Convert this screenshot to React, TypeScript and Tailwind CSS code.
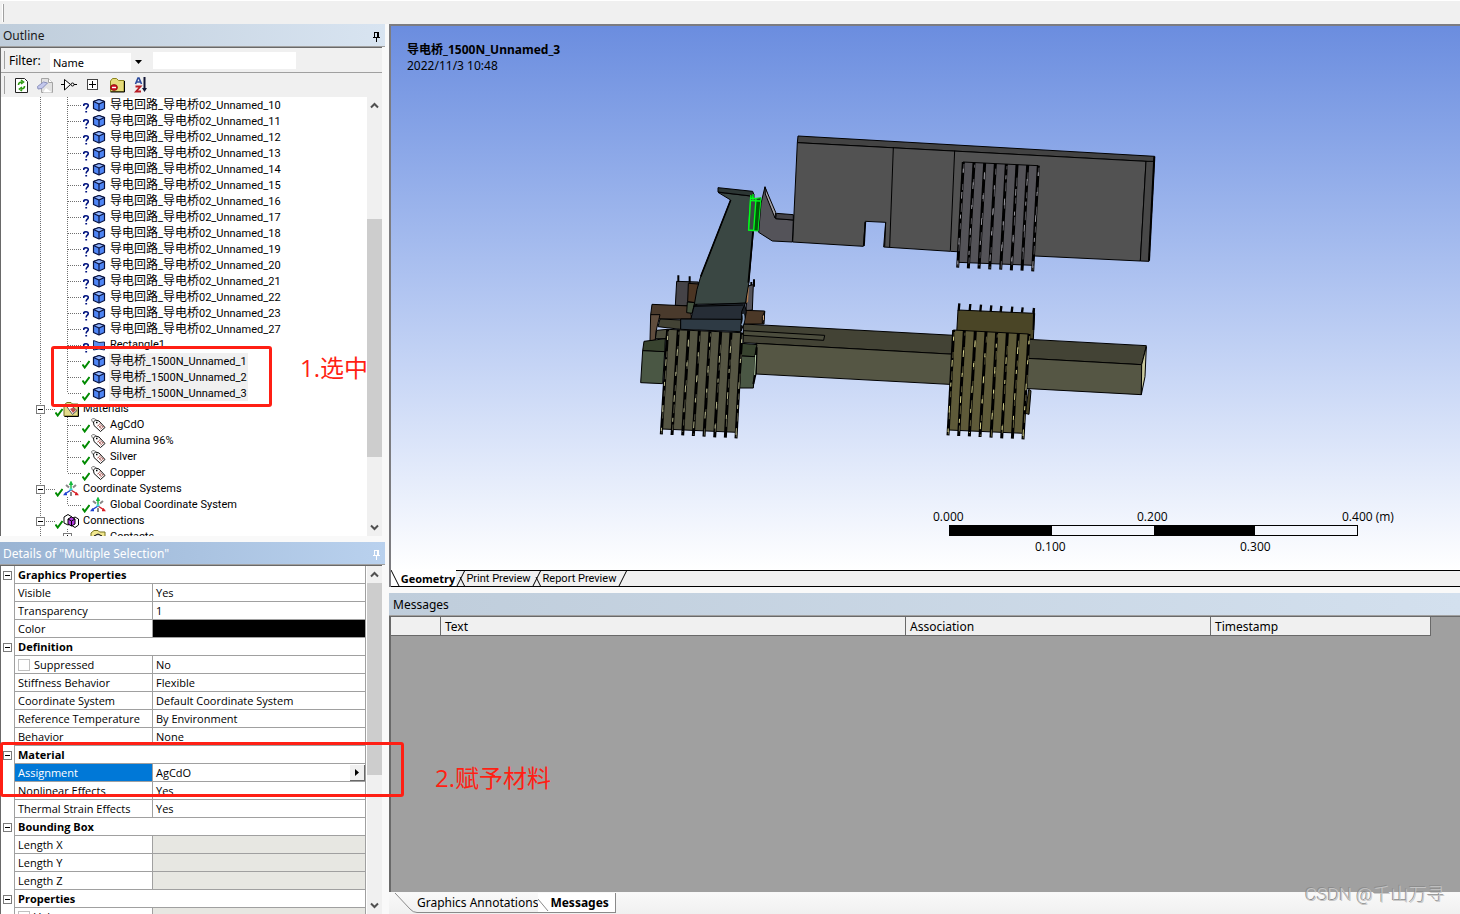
import type { ReactNode } from "react";

const UI = "font-['Open_Sans','Noto_Sans_CJK_SC',sans-serif]";
const HEAD = "font-['Noto_Sans','Noto_Sans_CJK_SC',sans-serif]";
const TREE = "font-['Roboto','Noto_Sans_CJK_SC',sans-serif]";

type Status = "unknown" | "ok";
type IconKind = "body" | "surface" | "materials" | "tag" | "axes" | "connections" | "contacts";
type TreeItem = {
  label: string;
  level: 1 | 2;
  icon: IconKind;
  status?: Status;
  expander?: "+" | "-";
  last?: boolean;
  selected?: boolean;
};

const bodies = [10, 11, 12, 13, 14, 15, 16, 17, 18, 19, 20, 21, 22, 23, 27];

const treeItems: TreeItem[] = [
  ...bodies.map((n): TreeItem => ({
    label: `导电回路_导电桥02_Unnamed_${n}`,
    level: 2,
    icon: "body",
    status: "unknown",
  })),
  { label: "Rectangle1", level: 2, icon: "surface", status: "unknown" },
  { label: "导电桥_1500N_Unnamed_1", level: 2, icon: "body", status: "ok", selected: true },
  { label: "导电桥_1500N_Unnamed_2", level: 2, icon: "body", status: "ok", selected: true },
  { label: "导电桥_1500N_Unnamed_3", level: 2, icon: "body", status: "ok", selected: true, last: true },
  { label: "Materials", level: 1, icon: "materials", status: "ok", expander: "-" },
  { label: "AgCdO", level: 2, icon: "tag", status: "ok" },
  { label: "Alumina 96%", level: 2, icon: "tag", status: "ok" },
  { label: "Silver", level: 2, icon: "tag", status: "ok" },
  { label: "Copper", level: 2, icon: "tag", status: "ok", last: true },
  { label: "Coordinate Systems", level: 1, icon: "axes", status: "ok", expander: "-" },
  { label: "Global Coordinate System", level: 2, icon: "axes", status: "ok", last: true },
  { label: "Connections", level: 1, icon: "connections", status: "ok", expander: "-" },
  { label: "Contacts", level: 2, icon: "contacts", expander: "+" },
];

type Prop = { label: string; value?: string; kind?: "group" | "color" | "check" | "active" | "readonly" | "checkReadonly" };

const props: Prop[] = [
  { label: "Graphics Properties", kind: "group" },
  { label: "Visible", value: "Yes" },
  { label: "Transparency", value: "1" },
  { label: "Color", kind: "color" },
  { label: "Definition", kind: "group" },
  { label: "Suppressed", value: "No", kind: "check" },
  { label: "Stiffness Behavior", value: "Flexible" },
  { label: "Coordinate System", value: "Default Coordinate System" },
  { label: "Reference Temperature", value: "By Environment" },
  { label: "Behavior", value: "None" },
  { label: "Material", kind: "group" },
  { label: "Assignment", value: "AgCdO", kind: "active" },
  { label: "Nonlinear Effects", value: "Yes" },
  { label: "Thermal Strain Effects", value: "Yes" },
  { label: "Bounding Box", kind: "group" },
  { label: "Length X", kind: "readonly" },
  { label: "Length Y", kind: "readonly" },
  { label: "Length Z", kind: "readonly" },
  { label: "Properties", kind: "group" },
  { label: "Volume", kind: "checkReadonly" },
];

function Pin() {
  return (
    <svg width="9" height="11" viewBox="0 0 9 11" fill="none" stroke="currentColor" shapeRendering="crispEdges">
      <path d="M2.5 1v5M2 1.5h5M5.5 1v5M6.5 1v5M1 6.5h7M4.5 7v4" />
    </svg>
  );
}

function Chevron({ down }: { down?: boolean }) {
  return (
    <svg width="9" height="7" viewBox="0 0 9 7" fill="none" stroke="#505050" strokeWidth="2">
      <path d={down ? "M1 1.5l3.5 3.5L8 1.5" : "M1 5.5L4.5 2 8 5.5"} />
    </svg>
  );
}

function ScrollBar({ thumb }: { thumb: string }) {
  return (
    <div className="flex w-[15px] shrink-0 flex-col items-center bg-[#f0f0f0]">
      <button type="button" aria-label="Scroll up" className="flex h-[17px] w-full shrink-0 items-center justify-center">
        <Chevron />
      </button>
      <div className="w-full flex-1">
        <div className={`w-full bg-[#cdcdcd] ${thumb}`} />
      </div>
      <button type="button" aria-label="Scroll down" className="flex h-[17px] w-full shrink-0 items-center justify-center">
        <Chevron down />
      </button>
    </div>
  );
}

// dotted connector lines left of a node
function Guides({ item }: { item: TreeItem }) {
  const dots = { stroke: "#6f6f6f", strokeDasharray: "1 1", shapeRendering: "crispEdges" as const };
  const box = (x: number) => (
    <g transform={`translate(${x} 4)`} shapeRendering="crispEdges">
      <path d="M.5 .5h8v8h-8z" fill="#fff" stroke="#7b7b7b" />
      <path d={item.expander === "+" ? "M2 4.5h5M4.5 2v5" : "M2 4.5h5"} stroke="#000" />
    </g>
  );
  if (item.level === 1) {
    return (
      <svg className="shrink-0" width="54" height="16">
        <path d="M39.5 0v16M45 8.5h9" fill="none" {...dots} />
        {box(35)}
      </svg>
    );
  }
  return (
    <svg className="shrink-0" width="81" height="16">
      <path d={`M39.5 0v16M66.5 0v${item.last ? 8 : 16}M67 8.5h14`} fill="none" {...dots} />
      {item.expander && box(62)}
    </svg>
  );
}

function StatusMark({ status }: { status?: Status }) {
  if (status === "unknown") {
    return (
      <svg className="w-2 shrink-0" width="8" height="16" viewBox="0 0 8 16" fill="none" stroke="#00137f" strokeWidth="1.6">
        <path d="M1.800 9V7.600Q2.200 6.800 4 6.800Q6.300 6.800 6.300 8.600Q6.300 9.800 5 10.400Q4.200 11 4.200 12.600M3.300 14.800h1.800" />
      </svg>
    );
  }
  if (status === "ok") {
    return (
      <svg className="w-2 shrink-0" width="8" height="16" viewBox="0 0 8 16" fill="none" stroke="#008a00" strokeWidth="2">
        <path d="M.5 11.500l2.200 3L7.500 8" />
      </svg>
    );
  }
  return <span className="w-2 shrink-0" />;
}

function NodeIcon({ kind }: { kind: IconKind }) {
  const paths: Record<IconKind, ReactNode> = {
    body: (
      <g stroke="#0a1440" strokeWidth="1.200" strokeLinejoin="round">
        <path d="M3.500 4.500L9 2.500 14.500 4.500v7L9 14 3.500 11.500z" fill="#4f86f5" />
        <path d="M3.500 4.500L9 7 14.500 4.500 9 2.500z" fill="#8fb4ff" />
        <path d="M9 7v7" />
      </g>
    ),
    surface: (
      <path d="M3.500 3.500L9 5.500 14.500 5v8L9 12 3.500 13z" fill="#5c8ef0" stroke="#14275c" />
    ),
    materials: (
      <g strokeLinejoin="round">
        <path d="M1 4L4 1.500h4L9.500 3H15v12H1z" fill="#e4dc8c" stroke="#77731f" />
        <path d="M3 4.500L7 3.500l7 6-4.500 4z" fill="#fff" stroke="#555" />
        <path d="M7 8l3-1.500L13 9l-3 3z" fill="#c0504a" />
        <path d="M1.500 15.500H15.500V4" fill="none" stroke="#000" />
      </g>
    ),
    tag: (
      <g strokeLinejoin="round">
        <path d="M6 7Q1 5 1.500 2.500 4 0 7 4" fill="none" stroke="#777" />
        <path d="M3.500 5L5.500 3 9 4l6 6.500-4.500 4L4 8.500z" fill="#fff" stroke="#111" />
        <path d="M6 5.500h1.500" stroke="#000" strokeWidth="1.500" />
        <path d="M7.500 9l3-2.500M9 10.500l3-2.500M10.500 12l3-2.500M8 8l4 4M9.500 7l4 3.500" stroke="#9a3a34" strokeDasharray="1 .7" />
      </g>
    ),
    axes: (
      <g fill="none" strokeWidth="1.400">
        <path d="M3 4l3 2.500M13 4l-3 2.500M8 11v4" stroke="#888" strokeWidth="2" />
        <path d="M8 9V1M6.500 4L8 1l1.500 3" stroke="#14b83c" />
        <path d="M8 9l-7 4.500M4 13.500H1.500L3 11.500" stroke="#1c3fd0" />
        <path d="M8 9l7 4.500M12 13.500h2.500L13 11.500" stroke="#d81c24" />
        <path d="M6.500 8.500h3" stroke="#3fd8e8" strokeWidth="2" />
      </g>
    ),
    connections: (
      <g stroke="#000" strokeWidth="1" strokeLinejoin="round">
        <path d="M1 4l4-2.500L9 4v6l-4 2-4-2z" fill="#fff" />
        <path d="M8 6l4-2 3.500 2v6L12 14.500 8 12z" fill="#fff" />
        <path d="M5 6l3.500-2L12 6v5l-3.500 2L5 11z" fill="#b43be0" />
        <path d="M5 6l3.500 2L12 6M8.500 8v5" fill="none" />
      </g>
    ),
    contacts: (
      <g>
        <path d="M1 4L4 1.500h4L9.500 3H15v12H1z" fill="#f1e78e" stroke="#77731f" />
        <path d="M4 7l4-2 4 2v5H4z" fill="#ddd" stroke="#000" />
      </g>
    ),
  };
  return (
    <svg className="shrink-0" width="16" height="16" viewBox="0 0 16 16">
      {paths[kind]}
    </svg>
  );
}

// Han runs are set one pixel larger than the Latin text
function NodeLabel({ text }: { text: string }) {
  return text.split(/([\u4e00-\u9fff]+)/).map((part, i) =>
    i % 2 ? <span key={i} className="text-[12px]">{part}</span> : part,
  );
}

function TreeRow({ item }: { item: TreeItem }) {
  return (
    <li className="flex h-4 items-center whitespace-nowrap">
      <Guides item={item} />
      <StatusMark status={item.status} />
      <NodeIcon kind={item.icon} />
      <button
        type="button"
        className={`ml-[3px] h-4 px-px text-[11px] leading-4 text-black ${item.selected ? "bg-[#f0f0f0]" : ""}`}
      >
        <NodeLabel text={item.label} />
      </button>
    </li>
  );
}

function ToolButton({ label, children }: { label: string; children: ReactNode }) {
  return (
    <button type="button" aria-label={label} className="flex size-4 items-center justify-center">
      <svg width="16" height="16" viewBox="0 0 16 16">
        {children}
      </svg>
    </button>
  );
}

function Outline() {
  return (
    <section>
      <header className={`${HEAD} flex h-[23px] items-center justify-between border-b border-[#a0a0a0] bg-linear-to-r from-[#bfcddb] to-[#d8e4f1] pt-[2px] pr-1 pl-[3px] text-[12px] text-[#1a1a1a]`}>
        <h2>Outline</h2>
        <button type="button" aria-label="Pin Outline" className="text-black"><Pin /></button>
      </header>
      <div className="mr-[3px] border-t border-l border-[#696969]">
        <div className="flex h-[25px] items-center border-b border-[#a0a0a0] bg-[#f0f0f0] pl-[3px]">
          <span className="h-[18px] w-px bg-[#a0a0a0]" />
          <label htmlFor="filter-kind" className={`${HEAD} ml-1 w-[41px] pt-[2px] text-[12px]`}>Filter:</label>
          <div className="relative mt-1 flex">
            <select id="filter-kind" className={`${HEAD} h-[18px] w-[95px] appearance-none bg-white pt-px pl-[3px] text-[11px] leading-4`}>
              <option>Name</option>
            </select>
            <span className="pointer-events-none absolute inset-y-0 right-0 flex w-[14px] items-center justify-center bg-[#f0f0f0]">
              <svg width="7" height="4"><path d="M0 0h7L3.500 4z" /></svg>
            </span>
          </div>
          <input aria-label="Filter text" className="ml-2 h-[17px] w-[143px] bg-white text-[11px]" />
        </div>
        <div className="flex h-6 items-center bg-[#f0f0f0] pl-[3px]">
          <span className="mr-2 h-[18px] w-px bg-[#a0a0a0]" />
          <div className="flex gap-2">
            <ToolButton label="Refresh">
              <path d="M2.500 1.500h9l3 3v11h-12z" fill="#fff" stroke="#222" />
              <path d="M5.500 8Q5.500 5 9 5M8 3l2.500 2L8 7M11.500 9Q11.500 12 8 12M9 10l-2.500 2L9 14" fill="none" stroke="#2f9b12" strokeWidth="1.600" />
            </ToolButton>
            <ToolButton label="Clear data">
              <path d="M4.500 1.500h7l4 4v10h-11z" fill="#e2e2e2" stroke="#a4a4a4" />
              <path d="M11.500 1.500v4h4" fill="#fff" stroke="#a4a4a4" />
              <path d="M.5 9.500L6.500 5l4 1L5 11.500 1 12z" fill="#c3c8ec" stroke="#8a90bc" />
              <path d="M9 11l6 4.500H6z" fill="#fff" />
            </ToolButton>
            <ToolButton label="Filter wire">
              <path d="M0 7.500h3M3.500 2.500v10.500l6-5.500zM13 7.500h3" fill="#fff" stroke="#000" />
              <circle cx="11.500" cy="7.500" r="1.500" fill="#fff" stroke="#000" />
            </ToolButton>
            <ToolButton label="Expand all">
              <path d="M2.500 2.500h10v10h-10z" fill="#fff" stroke="#444" shapeRendering="crispEdges" />
              <path d="M4 7.500h7M7.500 4v7" stroke="#000" shapeRendering="crispEdges" />
            </ToolButton>
            <ToolButton label="Hide folders">
              <path d="M1.500 4l2-2.500h4L9.500 3.500H15v11H1.500z" fill="#e6dc7c" stroke="#8a8420" />
              <path d="M1.500 15H15.500V4" fill="none" stroke="#000" />
              <ellipse cx="5" cy="10.500" rx="3.500" ry="3" fill="#d01020" stroke="#600" strokeWidth=".6" />
              <path d="M3 10.500h4" stroke="#fff" strokeWidth="1.400" />
            </ToolButton>
            <ToolButton label="Sort">
              <path d="M2.500 7L5 1h1l2.500 6M3.500 5h4" fill="none" stroke="#2c4a9c" strokeWidth="1.600" />
              <path d="M2.500 9.500h5L3 14.500H8" fill="none" stroke="#b81c24" strokeWidth="1.800" />
              <path d="M11.500 0v13" stroke="#111433" strokeWidth="2" />
              <path d="M9 11h5L11.500 15z" fill="#111433" />
            </ToolButton>
          </div>
        </div>
        <div className="flex h-[439px] overflow-hidden bg-white">
          <ul className={`${TREE} min-w-0 flex-1 overflow-hidden`}>
            {treeItems.map((item) => (
              <TreeRow key={item.label} item={item} />
            ))}
          </ul>
          <ScrollBar thumb="mt-[105px] h-[238px]" />
        </div>
      </div>
    </section>
  );
}

function PropRow({ prop }: { prop: Prop }) {
  const { label, value, kind } = prop;
  const id = label.toLowerCase().replace(/ /g, "-");
  if (kind === "group") {
    return (
      <tr className="h-[18px]">
        <td className="border-r border-[#a0a0a0] p-0">
          <button type="button" aria-label={`Collapse ${label}`} className="ml-[2px] block">
            <svg width="9" height="9" viewBox="0 0 9 9" fill="#fff" stroke="#7b7b7b" shapeRendering="crispEdges">
              <path d="M.5 .5h8v8h-8z" />
              <path d="M2 4.5h5" stroke="#000" />
            </svg>
          </button>
        </td>
        <th colSpan={2} className="border-r border-b border-[#a0a0a0] p-0 pl-[3px] text-left font-bold">{label}</th>
      </tr>
    );
  }
  const hasCheck = kind === "check" || kind === "checkReadonly";
  const readonly = kind === "readonly" || kind === "checkReadonly";
  return (
    <tr className="h-[18px]">
      <td className="border-r border-[#a0a0a0] p-0" />
      <td className={`border-r border-b border-[#a0a0a0] p-0 pl-[3px] ${kind === "active" ? "bg-[#0078d7] text-white" : ""}`}>
        {hasCheck ? (
          <span className="flex items-center gap-1">
            <input id={id} type="checkbox" className="size-3 appearance-none border border-[#c0c0c0] bg-white" />
            <label htmlFor={id}>{label}</label>
          </span>
        ) : (
          label
        )}
      </td>
      <td className={`border-r border-b border-[#a0a0a0] p-0 pl-[3px] ${kind === "color" ? "bg-black" : readonly ? "bg-[#e7e7e2]" : ""}`}>
        {kind === "active" ? (
          <span className="flex items-center justify-between">
            {value}
            <button type="button" aria-label="Choose material" className="flex h-[16px] w-[15px] items-center justify-center border-r border-b border-[#696969] bg-[#f0f0f0]">
              <svg width="4" height="7"><path d="M0 0v7l4-3.500z" /></svg>
            </button>
          </span>
        ) : (
          value
        )}
      </td>
    </tr>
  );
}

function Details() {
  return (
    <section className="flex min-h-0 flex-1 flex-col">
      <header className={`${HEAD} flex h-[23px] shrink-0 items-center justify-between border-b border-[#a0a0a0] bg-linear-to-r from-[#9ab4d3] to-[#b9d1ee] pt-[2px] pr-1 pl-[3px] text-[12px] text-white`}>
        <h2>Details of "Multiple Selection"</h2>
        <button type="button" aria-label="Pin Details"><Pin /></button>
      </header>
      <div className="mr-[3px] flex min-h-0 flex-1 overflow-hidden border-t border-l border-[#696969] bg-white">
        <div className="min-w-0 flex-1 overflow-hidden pr-px">
          <table className="w-full table-fixed border-separate border-spacing-0 text-[11px] leading-[17px]">
            <colgroup>
              <col className="w-[14px]" />
              <col className="w-[138px]" />
              <col />
            </colgroup>
            <tbody>
              {props.map((p) => (
                <PropRow key={p.label} prop={p} />
              ))}
            </tbody>
          </table>
        </div>
        <ScrollBar thumb="h-[192px]" />
      </div>
    </section>
  );
}

type FinProps = {
  top: [number, number];
  topEnd: [number, number];
  bottom: [number, number];
  bottomEnd: [number, number];
  fill: string;
  glint: string;
};

// stack of eight thin spring leaves, each drawn as a double edge with a few glints
function FinPack({ top, topEnd, bottom, bottomEnd, fill, glint }: FinProps) {
  const fins = Array.from({ length: 8 }, (_, i) => {
    const k = i / 7;
    return {
      x1: Math.round(top[0] + (topEnd[0] - top[0]) * k),
      y1: Math.round(top[1] + (topEnd[1] - top[1]) * k),
      x2: Math.round(bottom[0] + (bottomEnd[0] - bottom[0]) * k),
      y2: Math.round(bottom[1] + (bottomEnd[1] - bottom[1]) * k),
    };
  });
  return (
    <g>
      <path
        d={`M${top[0]} ${top[1]}L${topEnd[0]} ${topEnd[1]}L${bottomEnd[0] + 2} ${bottomEnd[1] - 18}L${bottom[0] + 2} ${bottom[1] - 16}z`}
        fill={fill}
        stroke="#000"
        strokeWidth="3"
      />
      {fins.map((f, i) => (
        <g key={f.x1} fill="none">
          <path d={`M${f.x1 + 1} ${f.y1}L${f.x2} ${f.y2}`} stroke="#000" strokeWidth="9" />
          <path d={`M${f.x1 + 3} ${f.y1 + 6}L${f.x2 + 1} ${f.y2 - 3}`} stroke={fill} strokeWidth="3" strokeDasharray="26 34 18 40" strokeDashoffset={i * 17} />
          <path d={`M${f.x1 + 1} ${f.y1 + 20}L${f.x2} ${f.y2 - 10}`} stroke={glint} strokeWidth="3" strokeDasharray="12 58 20 48" strokeDashoffset={i * 31} />
        </g>
      ))}
    </g>
  );
}

function Model() {
  const prongs = [988, 1021, 1053, 1084, 1114, 1147, 1178, 1212];
  return (
    <svg className="absolute top-[94px] left-[239px]" width="540" height="333" viewBox="0 0 1620 999" strokeLinejoin="round">
      <g stroke="#000" strokeWidth="3">
        <path d="M504 48L1574 109 1572 126 1548 124 502 68z" fill="#434343" />
        <path d="M502 68L1548 124 1531 423 1215 408 961 394 761 381 767 307 706 304 700 379 488 366z" fill="#525252" />
        <path d="M1548 124L1573 124 1557 424 1531 423z" fill="#484848" />
        <path d="M1573 110L1557 422" strokeWidth="6" />
        <path d="M790 82L779 381M974 92L961 392M767 307L764 380" fill="none" />
        <path d="M706 306L702 378" strokeWidth="5" />

        <path d="M405 200L437 296 490 300 487 366 427 363 386 337 393 250z" fill="#545359" />
        <path d="M405 202L437 277 435 294 406 222z" fill="#a5a3aa" />
        <path d="M439 280L490 284 490 300 437 296z" fill="#434247" />

        <path d="M340 612L1549 677 1535 734 340 668z" fill="#434335" />
        <path d="M378 670L1535 734 1534 824 378 762z" fill="#555644" />
        <path d="M1549 680L1545 770 1534 824 1535 734z" fill="#c9c89c" />
        <path d="M340 632L584 646 581 661 340 646z" fill="#4c4d3d" />

        <path d="M140 484L205 486 200 558 136 556z" fill="#454347" />
        <path d="M175 490L206 492 198 548 173 545z" fill="#4b3523" />
        <path d="M145 466V486M179 469V488M372 478V500M364 486V500" strokeWidth="6" />
        <path d="M353 498L370 494 367 570 348 572z" fill="#545359" />
        <path d="M352 505L357 500 354 545 349 550z" fill="#b27c4c" stroke="none" />
        <path d="M66 553L180 558 185 597 90 597 62 584z" fill="#4a3a2c" />
        <path d="M172 546L194 548 186 580 170 578z" fill="#45533f" />
        <path d="M62 584L90 584 78 634 76 660 60 663z" fill="#604d3d" />
        <path d="M346 571L404 573 402 612 342 612z" fill="#4b3827" />
        <path d="M404 575L403 598 397 610 397 590z" fill="#e4b88e" />
        <path d="M90 597L154 600 152 628 84 620z" fill="#434335" />
        <path d="M80 631L112 628 108 656 76 656z" fill="#4c4d3d" />

        <path d="M42 664L106 656 104 696 38 692z" fill="#38432f" />
        <path d="M38 692L104 695 98 791 32 788z" fill="#4a5744" />
        <path d="M336 670L381 674 374 710 334 708z" fill="#38432f" />
        <path d="M334 708L376 710 370 804 328 804z" fill="#4a5744" />
        <path d="M380 682L377 760 370 792" fill="none" strokeWidth="6" />
        <path d="M377 705L374 765" stroke="#b9d3ad" fill="none" />

        <path d="M264 217L362 228 372 222 370 335 357 486 346 550 193 553 201 508 212 470 302 240z" fill="#3a4743" />
        <path d="M264 203L368 214 371 222 363 228 264 216z" fill="#2c3634" />
        <path d="M302 240L212 470M369 335L355 488" strokeWidth="5" />
        <path d="M193 556L346 549 335 600 182 599z" fill="#262d36" />
        <path d="M190 559L340 555" fill="none" />
        <path d="M152 597L335 598 332 635 152 628z" fill="#2e3a44" />
        <path d="M344 554L349 575 343 608 333 634 335 575z" fill="#1b2027" />
        <path d="M339 582Q345 595 336 616" fill="none" stroke="#8ba5c6" strokeWidth="5" />

        <path d="M362 225L371 236 393 233 384 333 355 331z" fill="#005c08" stroke="#00e818" />
        <path d="M362 234L378 236 371 331 356 330z" fill="#3a4743" stroke="#00ff1c" strokeWidth="4" />
        <path d="M362 242L392 243M369 222V240" fill="none" stroke="#00ff1c" strokeWidth="4" />

        <path d="M984 570L1214 580 1210 657 1180 656 980 640z" fill="#4a4526" />
        {prongs.map((x, i) => (
          <path key={x} d={`M${x} ${550 + i * 2}L${x - 2} ${572 + i}`} strokeWidth="7" />
        ))}
        <path d="M1212 566L1210 630" strokeWidth="5" />
        <path d="M1196 808L1203 812 1197 883 1186 880z" fill="#4a4526" />
      </g>
      <FinPack top={[112, 628]} topEnd={[334, 638]} bottom={[94, 943]} bottomEnd={[318, 955]} fill="#555543" glint="#b9b98e" />
      <FinPack top={[999, 126]} topEnd={[1224, 137]} bottom={[983, 443]} bottomEnd={[1208, 454]} fill="#545358" glint="#98979e" />
      <FinPack top={[970, 630]} topEnd={[1196, 642]} bottom={[954, 946]} bottomEnd={[1179, 958]} fill="#5e5a39" glint="#d8d38b" />
    </svg>
  );
}

function ScaleBar() {
  return (
    <div className="absolute top-[483px] left-[542px] w-[480px] text-[12px] leading-4">
      <div className="flex">
        <span className="w-[204px]">0.000</span>
        <span className="w-[205px]">0.200</span>
        <span>0.400 (m)</span>
      </div>
      <div className="ml-4 flex h-[11px] w-[409px] border border-black">
        <span className="flex-1 bg-black" />
        <span className="flex-1" />
        <span className="flex-1 bg-black" />
        <span className="flex-1" />
      </div>
      <div className="mt-[3px] flex pl-[102px]">
        <span className="w-[205px]">0.100</span>
        <span>0.300</span>
      </div>
    </div>
  );
}

function Slant({ back, fwd }: { back?: boolean; fwd?: boolean }) {
  return (
    <svg className="shrink-0" width="9" height="16" viewBox="0 0 9 16" fill="none" stroke="#000">
      {fwd && <path d="M.5 16L8.500 0" />}
      {back && <path d={fwd ? "M4 6l5 10" : "M0 0l8 16"} />}
    </svg>
  );
}

function Viewport() {
  return (
    <section className="flex h-[563px] shrink-0 flex-col border-t-2 border-l-2 border-[#7c7c80]">
      <div className="relative min-h-0 flex-1 overflow-hidden bg-linear-to-b from-[#6b8ddf] to-white">
        <div className={`${HEAD} absolute top-[16px] left-4 text-[12px] leading-4`}>
          <p className="font-bold">导电桥_1500N_Unnamed_3</p>
          <p>2022/11/3 10:48</p>
        </div>
        <Model />
        <ScaleBar />
      </div>
      <nav className="flex h-[17px] shrink-0 items-stretch border-b border-black bg-[#f0f0f0] text-[11px] leading-4">
        <div className="flex bg-white">
          <Slant back />
          <button type="button" className="w-[56px] pt-px text-center font-bold">Geometry</button>
        </div>
        <div className="flex flex-1 border-t border-black">
          <Slant fwd back />
          <button type="button" className={`${TREE} w-[67px] text-center whitespace-nowrap`}>Print Preview</button>
          <Slant fwd back />
          <button type="button" className={`${TREE} w-[77px] text-center whitespace-nowrap`}>Report Preview</button>
          <Slant fwd />
        </div>
      </nav>
    </section>
  );
}

function Messages() {
  const cell = "border-r border-b border-[#696969] bg-[#f0f0f0] p-0 pl-1 text-left font-normal";
  return (
    <section className={`${HEAD} mt-[6px] flex min-h-0 flex-1 flex-col`}>
      <header className="flex h-[23px] shrink-0 items-center border-b border-[#a0a0a0] bg-linear-to-r from-[#bfcddb] to-[#d3e0ee] pt-[2px] pl-1 text-[12px]">
        <h2>Messages</h2>
      </header>
      <div className="min-h-0 flex-1 border-t border-l-2 border-[#696969] bg-[#a0a0a0]">
        <table className="w-[1040px] table-fixed border-separate border-spacing-0 text-[12px] leading-[17px]">
          <thead>
            <tr className="h-[19px]">
              <th className={`${cell} w-[50px]`} aria-label="Severity" />
              <th className={`${cell} w-[465px] pt-px`}>Text</th>
              <th className={`${cell} w-[305px] pt-px`}>Association</th>
              <th className={`${cell} pt-px`}>Timestamp</th>
            </tr>
          </thead>
        </table>
      </div>
      <nav className="flex h-[22px] shrink-0 border-t border-[#f8f8f8] bg-linear-to-b from-[#f9f9f9] to-[#f0f0f0] pl-1 text-[12px] leading-5">
        <svg className="shrink-0" width="24" height="20" fill="none" stroke="#8a8a8a"><path d="M2 0l15 16q3 3.500 7 3.500" /></svg>
        <button type="button" className="h-5 border-b border-[#8a8a8a] whitespace-nowrap">Graphics Annotations</button>
        <div className="flex h-5 border-r border-b border-[#8a8a8a] bg-white">
          <svg className="shrink-0" width="12" height="19" fill="none" stroke="#8a8a8a"><path d="M0 6l10 12" /></svg>
          <button type="button" className="pr-[6px] font-bold">Messages</button>
        </div>
      </nav>
    </section>
  );
}

export default function App() {
  return (
    <div className={`${UI} relative flex h-screen flex-col overflow-hidden bg-[#f9f9f9] text-black`}>
      <div className="flex h-6 shrink-0 items-center border-t border-white bg-[#f0f0f0] pl-[2px]">
        <span className="h-[18px] w-[2px] border-r border-[#a0a0a0] bg-white" />
      </div>
      <div className="flex min-h-0 flex-1 gap-1">
        <aside className="flex w-[385px] shrink-0 flex-col gap-[6px]">
          <Outline />
          <Details />
        </aside>
        <main className="flex min-w-0 flex-1 flex-col">
          <Viewport />
          <Messages />
        </main>
      </div>

      {/* tutorial callouts drawn over the window */}
      <div className="pointer-events-none absolute top-[346px] left-[51px] h-[61px] w-[221px] rounded-[3px] border-3 border-[#ff1f14]" />
      <p className="pointer-events-none absolute top-[350px] left-[300px] text-[24px] leading-9 text-[#ff1f14]">1.选中</p>
      <div className="pointer-events-none absolute top-[742px] left-0 h-[55px] w-[404px] rounded-[3px] border-3 border-[#ff1f14]" />
      <p className="pointer-events-none absolute top-[760px] left-[435px] text-[24px] leading-9 text-[#ff1f14]">2.赋予材料</p>
      <p className={`${TREE} pointer-events-none absolute right-[15px] bottom-[5px] text-[18px] leading-7 font-light text-[#c4c4c4] [text-shadow:-1px_-1px_0_#8c8c8c]`}>
        CSDN @千山万寻
      </p>
    </div>
  );
}
